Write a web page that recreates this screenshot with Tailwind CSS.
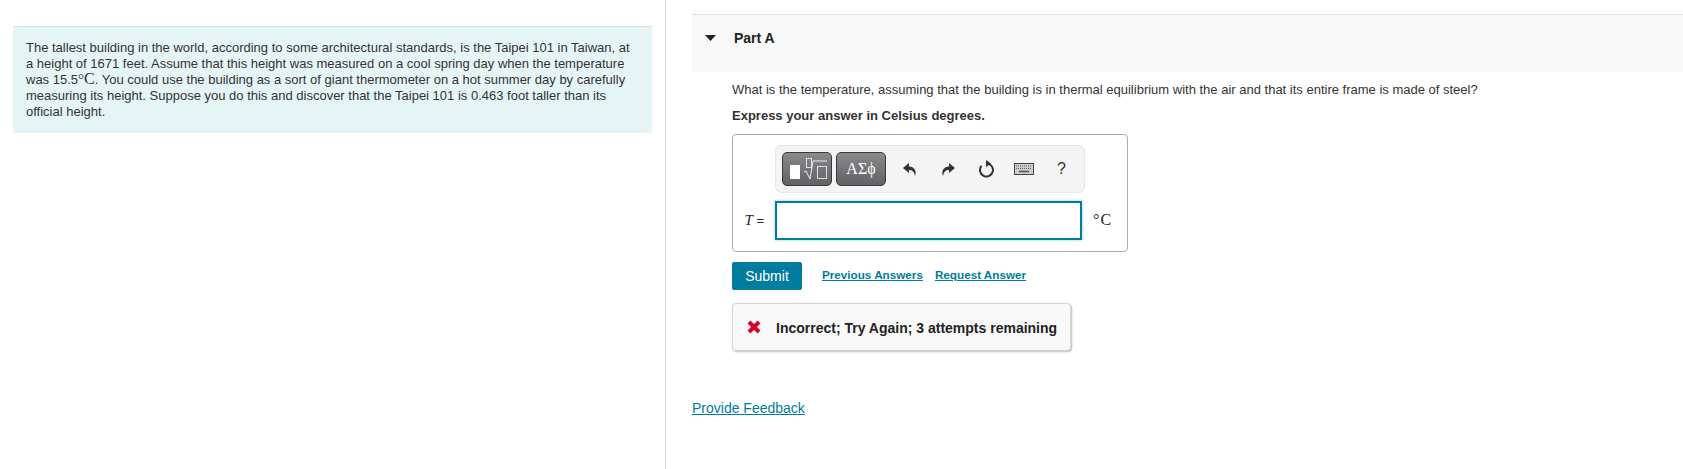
<!DOCTYPE html>
<html lang="en">
<head>
  <meta charset="UTF-8" />
  <title>Part A</title>
  <script src="https://cdn.jsdelivr.net/npm/@tailwindcss/browser@4"></script>
</head>
<body class="bg-white font-['Liberation_Sans',Arial,sans-serif] text-[#333]">
  <div class="flex h-[469px] overflow-hidden">

    <!-- intro column -->
    <div class="w-[665px] h-full shrink-0 pl-[13px] pr-[13px] pt-[26px]">
      <div class="bg-[#e5f5f6] border-t border-[#d8e2e4] pl-[13px] pr-[20px] pt-[13px] h-[107px] text-[13px] leading-[16px] text-[#333]">
        The tallest building in the world, according to some architectural standards, is the Taipei 101 in Taiwan, at a height of 1671 feet. Assume that this height was measured on a cool spring day when the temperature was 15.5<span class="font-['Liberation_Serif',serif] text-[15px] leading-[10px]">°</span><span class="font-['Liberation_Serif',serif] text-[16px] leading-[10px]">C</span>. You could use the building as a sort of giant thermometer on a hot summer day by carefully measuring its height. Suppose you do this and discover that the Taipei 101 is 0.463 foot taller than its official height.
      </div>
    </div>

    <!-- part column -->
    <div class="flex-1 h-full border-l border-[#c7d5e6] pl-[26px] pt-[14px]">
      <div class="bg-[#f9f9f9] border-t border-[#dde3ea] h-[58px] flex items-start pl-[13px] pt-[15px]">
        <svg class="mt-[5px]" width="11" height="6" viewBox="0 0 11 6"><path d="M0 0h11L5.500 6z" fill="#222"/></svg>
        <span class="ml-[18px] text-[14px] font-bold text-[#222] leading-[16px]">Part A</span>
      </div>

      <div class="pl-[40px]">
        <p class="mt-[10px] text-[13px] leading-[16px] text-[#333]">What is the temperature, assuming that the building is in thermal equilibrium with the air and that its entire frame is made of steel?</p>
        <p class="mt-[10px] text-[13px] leading-[16px] font-bold text-[#333]">Express your answer in Celsius degrees.</p>

        <!-- answer box -->
        <div class="mt-[10px] w-[396px] h-[118px] border border-[#aaa] rounded-[4px]">
          <div class="ml-[42px] mt-[10px] w-[310px] h-[48px] bg-[#f4f4f4] border border-[#e6e6e6] rounded-[6px] flex items-center pl-[6px]">
            <div class="w-[50px] h-[34px] rounded-[5px] border border-[#3a3a3a] bg-gradient-to-b from-[#8a898c] to-[#626165]">
              <svg width="48" height="32" viewBox="0 0 48 32" fill="none">
                <rect x="7" y="12" width="10" height="14" fill="#fff"/>
                <rect x="23.500" y="5.500" width="5" height="9" stroke="#ddd"/>
                <path d="M21 19l2-1 4 8 3-18h14" stroke="#eee"/>
                <rect x="34.500" y="13.500" width="9" height="12" stroke="#ddd"/>
              </svg>
            </div>
            <div class="ml-[4px] w-[50px] h-[34px] rounded-[5px] border border-[#3a3a3a] bg-gradient-to-b from-[#8a898c] to-[#626165] flex items-center justify-center font-['Liberation_Serif',serif] text-[16px] text-white">ΑΣϕ</div>
            <svg class="ml-[17px]" width="14" height="15" viewBox="0 0 14 15"><path d="M6 1L0 6l6 5V8c3 0 5 1 6 6 2-6-1-9-6-9.500z" fill="#333"/></svg>
            <svg class="ml-[24px]" width="14" height="15" viewBox="0 0 14 15"><path d="M8 1l6 5-6 5V8c-3 0-5 1-6 6C0 8 3 5 8 4.500z" fill="#333"/></svg>
            <svg class="ml-[23px]" width="17" height="18" viewBox="0 0 17 18" fill="none"><path d="M8.500 3.500a6.500 6.500 0 1 1-5 2.300" stroke="#333" stroke-width="2"/><path d="M8 0l5 3.500L8 7z" fill="#333"/></svg>
            <svg class="ml-[19px]" width="20" height="12" viewBox="0 0 20 12"><rect x=".5" y=".5" width="19" height="11" fill="#ccc" stroke="#444"/><path d="M2 3h16M2 5.500h16" stroke="#666" stroke-dasharray="1 1"/><path d="M5 8.500h10" stroke="#555" stroke-width="1.500"/></svg>
            <span class="ml-[23px] text-[16px] text-[#333]">?</span>
          </div>

          <div class="flex items-center mt-[8px]">
            <span class="w-[42px] text-right pr-[11px] text-[13px] text-[#222]"><i class="font-['Liberation_Serif',serif] text-[15px]">T</i> =</span>
            <div class="w-[307px] h-[39px] bg-white border-2 border-[#007c9e] shadow-[0_0_3px_#8cc8d8]"></div>
            <span class="ml-[11px] -mt-[1px] font-['Liberation_Serif',serif] text-[16px] tracking-[1px] text-[#222]">°C</span>
          </div>
        </div>

        <div class="mt-[10px] flex items-start">
          <button class="w-[70px] h-[28px] bg-[#007c9e] rounded-[2px] text-white text-[14px]">Submit</button>
          <a class="ml-[20px] mt-[4px] text-[11.7px] font-bold text-[#007c9e] underline">Previous Answers</a>
          <a class="ml-[12px] mt-[4px] text-[11.7px] font-bold text-[#007c9e] underline">Request Answer</a>
        </div>

        <div class="mt-[13px] w-[339px] h-[48px] bg-[#f9f9f9] border border-[#d4d4d4] rounded-[4px] shadow-[1px_1px_2px_#bbb] flex items-center pl-[14px]">
          <svg width="14" height="14" viewBox="0 0 14 14"><path d="M2 2l10 10M12 2L2 12" stroke="#d9002b" stroke-width="4"/></svg>
          <span class="ml-[15px] pt-[2px] text-[14px] font-bold text-[#222]">Incorrect; Try Again; 3 attempts remaining</span>
        </div>
      </div>

      <a class="block mt-[47px] text-[14px] text-[#007c9e] underline">Provide Feedback</a>
    </div>
  </div>
</body>
</html>
